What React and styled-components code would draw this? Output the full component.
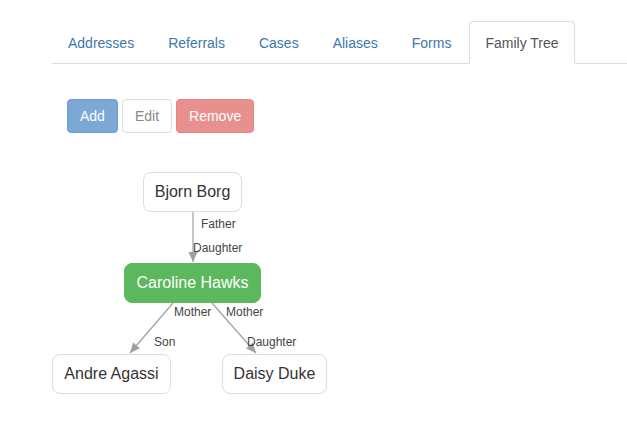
import React from 'react';
import styled, { createGlobalStyle } from 'styled-components';

const Global = createGlobalStyle`
  body {
    margin: 0;
    background: #fff;
    font-family: "Liberation Sans", Arial, sans-serif;
    font-size: 14px;
    color: #333;
  }
`;

const Page = styled.div`
  padding: 21px 0 0 52px;
`;

const Tabs = styled.ul`
  display: flex;
  list-style: none;
  margin: 0;
  padding: 0;
  border-bottom: 1px solid #ddd;
`;

const Tab = styled.li`
  margin-bottom: -1px;
  & > a {
    display: block;
    padding: 11px 15px 10px;
    margin-right: 2px;
    line-height: 20px;
    border: 1px solid ${(p) => (p.active ? '#ddd' : 'transparent')};
    border-bottom-color: ${(p) => (p.active ? '#fff' : 'transparent')};
    border-radius: 4px 4px 0 0;
    background: ${(p) => (p.active ? '#fff' : 'transparent')};
    color: ${(p) => (p.active ? '#555' : '#3b78ad')};
    text-decoration: none;
  }
`;

const Toolbar = styled.div`
  display: flex;
  gap: 4px;
  padding: 35px 0 0 15px;
`;

const Button = styled.button`
  font-family: inherit;
  font-size: 14px;
  line-height: 20px;
  padding: 6px 12px;
  border-radius: 4px;
  border: 1px solid ${(p) => p.border};
  background: ${(p) => p.bg};
  color: ${(p) => p.fg};
  cursor: not-allowed;
`;

const Canvas = styled.div`
  position: relative;
  margin-top: 27px;
  width: 300px;
  height: 240px;
`;

const Edges = styled.svg`
  position: absolute;
  left: 0;
  top: 0;
  overflow: visible;
`;

const Node = styled.div`
  position: absolute;
  box-sizing: border-box;
  height: 40px;
  display: flex;
  align-items: center;
  justify-content: center;
  font-size: 16px;
  border-radius: 8px;
  border: 1px solid ${(p) => (p.focus ? '#5cb85c' : '#ddd')};
  background: ${(p) => (p.focus ? '#5cb85c' : '#fff')};
  color: ${(p) => (p.focus ? '#fff' : '#333')};
`;

const Label = styled.span`
  position: absolute;
  font-size: 12px;
  line-height: 14px;
  color: #444;
  white-space: nowrap;
`;

const tabs = ['Addresses', 'Referrals', 'Cases', 'Aliases', 'Forms', 'Family Tree'];

const nodes = [
  { name: 'Bjorn Borg', x: 91, y: 12, w: 99 },
  { name: 'Caroline Hawks', x: 72, y: 103, w: 137, focus: true },
  { name: 'Andre Agassi', x: 0, y: 194, w: 119 },
  { name: 'Daisy Duke', x: 170, y: 194, w: 105 },
];

const edges = [
  [141, 52, 141, 102],
  [121, 143, 78, 193],
  [160, 143, 204, 193],
];

const labels = [
  { t: 'Father', x: 149, y: 57 },
  { t: 'Daughter', x: 141, y: 81 },
  { t: 'Mother', x: 122, y: 145 },
  { t: 'Mother', x: 174, y: 145 },
  { t: 'Son', x: 102, y: 175 },
  { t: 'Daughter', x: 195, y: 175 },
];

function arrowHead(x1, y1, x2, y2) {
  const a = Math.atan2(y2 - y1, x2 - x1);
  const len = 10;
  const half = 4.5;
  const bx = x2 - len * Math.cos(a);
  const by = y2 - len * Math.sin(a);
  const px = -Math.sin(a) * half;
  const py = Math.cos(a) * half;
  return `${x2},${y2} ${bx + px},${by + py} ${bx - px},${by - py}`;
}

export default function App() {
  return (
    <Page>
      <Global />
      <Tabs>
        {tabs.map((t) => (
          <Tab key={t} active={t === 'Family Tree'}>
            <a href="#">{t}</a>
          </Tab>
        ))}
      </Tabs>
      <Toolbar>
        <Button bg="#7ba8d4" border="#6f9fce" fg="#fff">Add</Button>
        <Button bg="#fff" border="#ddd" fg="#888">Edit</Button>
        <Button bg="#e8908e" border="#e38584" fg="#fff">Remove</Button>
      </Toolbar>
      <Canvas>
        <Edges width="300" height="240">
          {edges.map(([x1, y1, x2, y2], i) => (
            <g key={i}>
              <line x1={x1} y1={y1} x2={x2} y2={y2} stroke="#a0a0a0" strokeWidth="1.2" />
              <polygon points={arrowHead(x1, y1, x2, y2)} fill="#a0a0a0" />
            </g>
          ))}
        </Edges>
        {labels.map((l, i) => (
          <Label key={i} style={{ left: l.x, top: l.y }}>{l.t}</Label>
        ))}
        {nodes.map((n) => (
          <Node key={n.name} focus={n.focus} style={{ left: n.x, top: n.y, width: n.w }}>
            {n.name}
          </Node>
        ))}
      </Canvas>
    </Page>
  );
}
